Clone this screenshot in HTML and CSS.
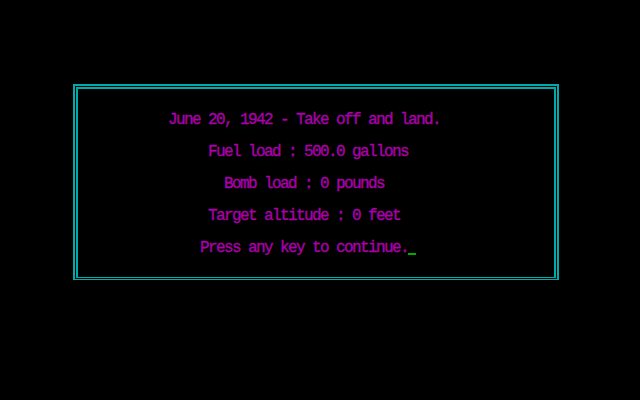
FILE: index.html
```html
<!DOCTYPE html>
<html>
<head>
<meta charset="utf-8">
<link rel="stylesheet" href="styles.css">
</head>
<body>
<div class="frame">
  <div class="inner">
<pre class="msg">June 20, 1942 - Take off and land.
     Fuel load : 500.0 gallons
       Bomb load : 0 pounds
     Target altitude : 0 feet
    Press any key to continue.<span class="cursor"></span></pre>
  </div>
</div>
</body>
</html>
```
FILE: styles.css
```css
html, body {
  margin: 0;
  padding: 0;
  background: #000;
  width: 640px;
  height: 400px;
  overflow: hidden;
}
body {
  padding-top: 84px;
  box-sizing: border-box;
}
.frame {
  margin-left: 73px;
  width: 486px;
  height: 196px;
  box-sizing: border-box;
  border: 2px solid #00AAAA;
  border-bottom-width: 1px;
  padding: 1px;
}
.inner {
  height: 100%;
  box-sizing: border-box;
  border: 2px solid #00AAAA;
  border-bottom-width: 1px;
  padding: 15px 0 0 90px;
}
.msg {
  margin: 0;
  font-family: "Liberation Mono", monospace;
  font-size: 16px;
  letter-spacing: -1.6px;
  line-height: 32px;
  color: #AA00AA;
  white-space: pre;
  -webkit-text-stroke: 0.35px #AA00AA;
}
.cursor {
  display: inline-block;
  width: 8px;
  height: 2px;
  background: #00AA00;
  vertical-align: -3px;
}
```
